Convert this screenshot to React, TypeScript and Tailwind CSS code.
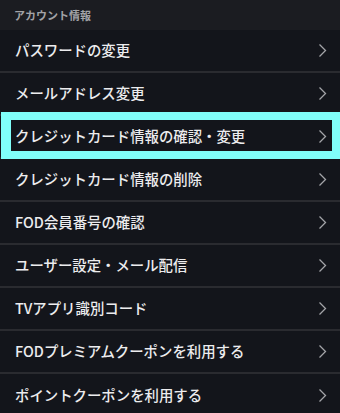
import React from 'react'

const items = [
  'パスワードの変更',
  'メールアドレス変更',
  'クレジットカード情報の確認・変更',
  'クレジットカード情報の削除',
  'FOD会員番号の確認',
  'ユーザー設定・メール配信',
  'TVアプリ識別コード',
  'FODプレミアムクーポンを利用する',
  'ポイントクーポンを利用する',
]

const Chevron = () => (
  <svg width="9" height="15" viewBox="0 0 9 15" fill="none" className="shrink-0">
    <path d="M1.5 1.5 L7.5 7.5 L1.5 13.5" stroke="#a3a4a8" strokeWidth="1.3" />
  </svg>
)

export default function App() {
  return (
    <div
      className="w-[340px] h-[413px] overflow-hidden bg-[#13151b]"
      style={{ fontFamily: '"Noto Sans CJK JP", "Noto Sans", sans-serif' }}
    >
      <div className="h-[30px] bg-[#1b1c21] flex items-center px-[14px] text-[11px] font-bold text-[#a2a3a7]">
        アカウント情報
      </div>
      <ul className="flex flex-col">
        {items.map((label, i) => (
          <li
            key={label}
            className={`relative h-[43px] flex items-center justify-between pl-[15px] pr-[13px] bg-[#13151b] ${
              i < items.length - 1 ? 'border-b-2 border-[#2a2b30]' : ''
            }`}
          >
            <span className="text-[14.4px] font-medium text-[#ececee] leading-none">{label}</span>
            <Chevron />
            {i === 2 && (
              <div className="absolute -top-[4px] -bottom-[2px] left-[1px] right-0 border-8 border-l-[10px] border-[#80fffa] pointer-events-none" />
            )}
          </li>
        ))}
      </ul>
    </div>
  )
}
